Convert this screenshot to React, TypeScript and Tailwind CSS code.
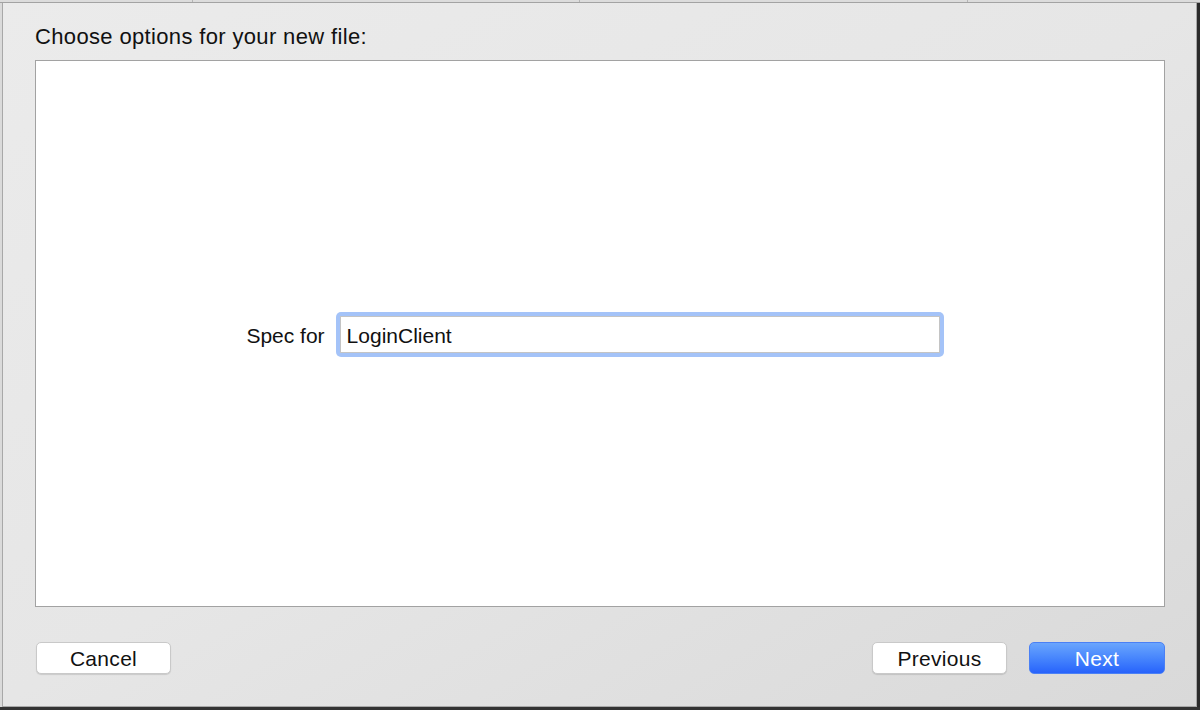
import { useState } from 'react';

const font = { fontFamily: '"Liberation Sans", Arial, sans-serif' };

export default function App() {
  const [name, setName] = useState('LoginClient');

  return (
    <div className="w-[1200px] h-[710px] bg-[#2e2e2e] flex flex-col overflow-hidden" style={font}>
      {/* window tabs peeking above the sheet */}
      <div className="h-[3px] flex bg-[#dcdcdc] border-b border-[#a3a3a3]">
        <div className="w-[193px] border-r border-[#b5b5b5]" />
        <div className="w-[387px] border-r border-[#b5b5b5]" />
        <div className="w-[388px] border-r border-[#b5b5b5]" />
        <div className="flex-1" />
      </div>

      <div className="flex flex-1 min-h-0">
        <div className="w-[2px] bg-[#dadada]" />

        {/* sheet */}
        <div className="flex-1 flex flex-col border-l border-r border-b border-[#a8a8a8] bg-gradient-to-br from-[#ebebeb] via-[#e6e6e6] to-[#d9d9d9] pl-[32px] pr-[31px] pt-[21px] pb-[32px]">
          <h1 className="h-[26px] leading-[26px] text-[22px] tracking-[0.35px] text-[#111] mb-[10px]">
            Choose options for your new file:
          </h1>

          <div className="flex-1 bg-white border border-[#a2a2a2] flex items-center justify-center pr-[10px] pt-[2px]">
            <div className="flex items-center gap-[11px]">
              <label className="text-[21px] text-[#111] pt-[3px]">Spec for</label>
              <div className="w-[608px] h-[45px] rounded-[5px] bg-[#a4c3f8] p-[4px]">
                <input
                  value={name}
                  onChange={(e) => setName(e.target.value)}
                  className="w-full h-full bg-white border border-[#c4c4c4] px-[6px] pt-[2px] text-[21px] text-[#111] outline-none"
                  style={font}
                />
              </div>
            </div>
          </div>

          <div className="mt-[35px] flex items-center">
            <button className="w-[135px] h-[32px] rounded-[5px] bg-white border border-[#c9c9c9] shadow-[0_1px_1px_rgba(0,0,0,0.12)] text-[21px] tracking-[0.3px] text-[#111] ml-[1px] pb-[2px]">
              Cancel
            </button>
            <div className="flex-1" />
            <button className="w-[135px] h-[32px] rounded-[5px] bg-white border border-[#c9c9c9] shadow-[0_1px_1px_rgba(0,0,0,0.12)] text-[21px] tracking-[0.3px] text-[#111] pb-[2px]">
              Previous
            </button>
            <button className="w-[136px] h-[32px] ml-[22px] rounded-[5px] bg-gradient-to-b from-[#6aa5fd] to-[#2862fb] border border-[#4a80f5] text-[21px] tracking-[0.3px] text-white pb-[2px]">
              Next
            </button>
          </div>
        </div>

        <div className="w-[3px] bg-[#2b2b2b]" />
      </div>

      <div className="h-[3px] bg-[#333]" />
    </div>
  );
}
